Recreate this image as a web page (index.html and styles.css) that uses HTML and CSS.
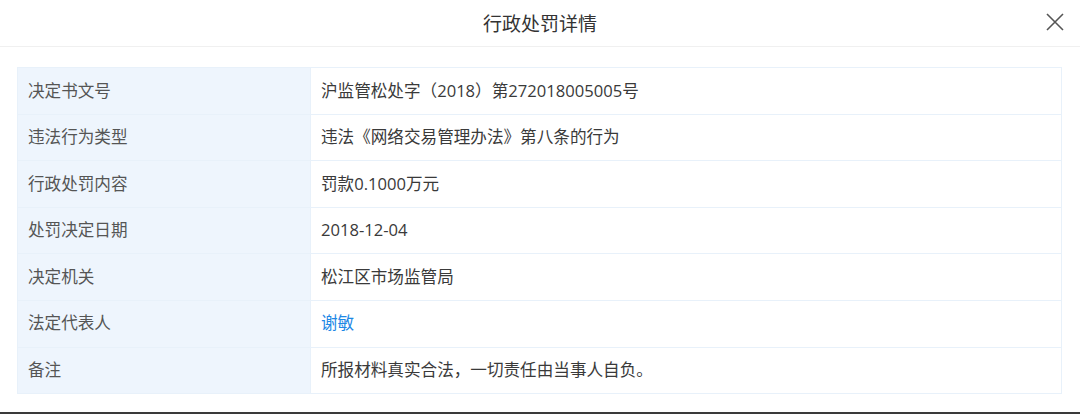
FILE: index.html
```html
<!DOCTYPE html>
<html lang="zh-CN">
<head>
    <meta charset="UTF-8">
    <meta name="viewport" content="width=device-width, initial-scale=1.0">
    <title>行政处罚详情</title>
    <link rel="stylesheet" href="styles.css">
</head>
<body>

    <div class="dialog">
        <div class="dialog-header">
            <h1>行政处罚详情</h1>
            <span class="close">
                <svg width="18" height="18" viewBox="0 0 18 18">
                    <path d="M1 1 L17 17 M17 1 L1 17" stroke="#555" stroke-width="1.6" fill="none"/>
                </svg>
            </span>
        </div>

        <div class="dialog-body">
            <table class="detail-table">
                <tbody>
                    <tr>
                        <td class="label">决定书文号</td>
                        <td>沪监管松处字（2018）第272018005005号</td>
                    </tr>
                    <tr>
                        <td class="label">违法行为类型</td>
                        <td>违法《网络交易管理办法》第八条的行为</td>
                    </tr>
                    <tr>
                        <td class="label">行政处罚内容</td>
                        <td>罚款0.1000万元</td>
                    </tr>
                    <tr>
                        <td class="label">处罚决定日期</td>
                        <td>2018-12-04</td>
                    </tr>
                    <tr>
                        <td class="label">决定机关</td>
                        <td>松江区市场监管局</td>
                    </tr>
                    <tr>
                        <td class="label">法定代表人</td>
                        <td><a class="link" href="#">谢敏</a></td>
                    </tr>
                    <tr>
                        <td class="label">备注</td>
                        <td>所报材料真实合法，一切责任由当事人自负。</td>
                    </tr>
                </tbody>
            </table>
        </div>
    </div>

    <div class="bottom-bar"></div>

</body>
</html>
```

FILE: styles.css
```css
html, body {
    margin: 0;
    padding: 0;
    height: 414px;
    overflow: hidden;
}
body {
    font-family: "Open Sans", "Noto Sans CJK SC", "Microsoft YaHei", sans-serif;
    background: #fff;
    color: #333;
    display: flex;
    flex-direction: column;
}
.dialog {
    flex: 1;
}
.dialog-header {
    height: 46px;
    border-bottom: 1px solid #f0f0f0;
    display: flex;
    align-items: center;
    justify-content: center;
    position: relative;
}
.dialog-header h1 {
    margin: 0;
    font-size: 19px;
    font-weight: normal;
    color: #333;
}
.close {
    position: absolute;
    right: 16px;
    top: 13px;
    width: 18px;
    height: 18px;
    cursor: pointer;
}
.dialog-body {
    padding: 20px 18px 0 17px;
}
.detail-table {
    width: 100%;
    border-collapse: collapse;
    font-size: 16.6px;
}
.detail-table td {
    border: 1px solid #e8f1fa;
    height: 45.6px;
    padding: 0 10px;
    color: #3a3a3a;
    line-height: 1;
}
.detail-table td.label {
    width: 272px;
    background-color: #eef5fd;
    color: #555;
}
.link {
    color: #1e88e5;
    text-decoration: none;
}
.bottom-bar {
    height: 2px;
    background: #3a3a3a;
}
```
